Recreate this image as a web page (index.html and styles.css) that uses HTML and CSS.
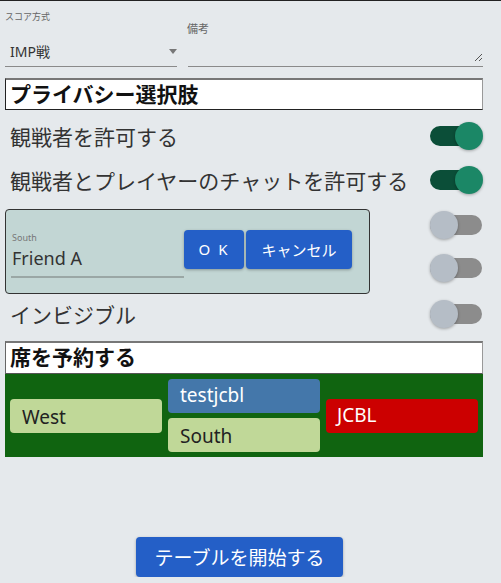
FILE: index.html
```html
<!DOCTYPE html>
<html lang="ja">
<head>
    <meta charset="UTF-8">
    <meta name="viewport" content="width=device-width, initial-scale=1.0">
    <title>テーブル設定</title>
    <link rel="stylesheet" href="styles.css">
</head>
<body>
    <div class="panel">
        <!-- scoring + notes -->
        <div class="field-row">
            <div class="field field-select">
                <span class="field-label label-score">スコア方式</span>
                <div class="field-input">
                    <span>IMP戦</span>
                    <svg class="arrow" width="8" height="5" viewBox="0 0 8 5"><path d="M0 0 H8 L4 5 Z" fill="#777"/></svg>
                </div>
            </div>
            <div class="field field-notes">
                <span class="field-label">備考</span>
                <div class="field-input notes-input">
                    <svg class="resize" width="9" height="9" viewBox="0 0 9 9"><path d="M1 8 L8 1 M5 8 L8 5" stroke="#555" stroke-width="1"/></svg>
                </div>
            </div>
        </div>

        <h2 class="section-title">プライバシー選択肢</h2>

        <div class="row">
            <span>観戦者を許可する</span>
            <span class="switch on"><span class="track"></span><span class="thumb"></span></span>
        </div>
        <div class="row">
            <span>観戦者とプレイヤーのチャットを許可する</span>
            <span class="switch on"><span class="track"></span><span class="thumb"></span></span>
        </div>

        <div class="friend-row">
            <div class="friend-box">
                <div class="friend-field">
                    <span class="friend-label">South</span>
                    <span class="friend-value">Friend A</span>
                </div>
                <button class="btn btn-ok">O K</button>
                <button class="btn btn-cancel">キャンセル</button>
            </div>
            <div class="switch-col">
                <span class="switch"><span class="track"></span><span class="thumb"></span></span>
                <span class="switch"><span class="track"></span><span class="thumb"></span></span>
            </div>
        </div>

        <div class="row row-short">
            <span>インビジブル</span>
            <span class="switch"><span class="track"></span><span class="thumb"></span></span>
        </div>

        <h2 class="section-title title-seats">席を予約する</h2>
        <div class="seats">
            <div class="seat-col">
                <div class="seat seat-free">West</div>
            </div>
            <div class="seat-col">
                <div class="seat seat-me">testjcbl</div>
                <div class="seat seat-free">South</div>
            </div>
            <div class="seat-col">
                <div class="seat seat-taken">JCBL</div>
            </div>
        </div>

        <button class="btn btn-start">テーブルを開始する</button>
    </div>
</body>
</html>
```

FILE: styles.css
```css
body {
    margin: 0;
    border-top: 1px solid #222;
    background-color: #e5e9ec;
    font-family: "Noto Sans", "Noto Sans CJK JP", sans-serif;
    color: #333;
}
.panel {
    width: 478px;
    margin-left: 5px;
    display: flex;
    flex-direction: column;
}

/* top fields */
.field-row {
    display: flex;
    gap: 10px;
    height: 66px;
}
.field {
    display: flex;
    flex-direction: column;
    justify-content: flex-end;
}
.field-select {
    width: 172px;
}
.field-notes {
    flex: 1;
}
.field-label {
    font-size: 11px;
    color: #666;
    line-height: 14px;
}
.label-score {
    font-size: 9px;
    margin-bottom: 12px;
}
.field-input {
    position: relative;
    height: 30px;
    border-bottom: 1px solid #8a8a8a;
    display: flex;
    align-items: center;
    padding-left: 5px;
    font-size: 14px;
    color: #333;
}
.notes-input {
    height: 29px;
    margin-top: 1px;
    margin-left: 1px;
}
.arrow {
    position: absolute;
    right: 0;
    top: 13px;
}
.resize {
    position: absolute;
    right: 0;
    bottom: 4px;
}

/* section titles */
.section-title {
    margin: 11px 0 0;
    height: 29px;
    background: #fff;
    border: 1px solid #222;
    border-top: 2px solid #777;
    border-right-color: #999;
    font-size: 21px;
    font-weight: bold;
    line-height: 29px;
    padding-left: 4px;
    color: #111;
}
.title-seats {
    margin-top: 7px;
    height: 30px;
    border-bottom: 1px solid #555;
    border-left-color: #666;
}

/* setting rows */
.row {
    display: flex;
    align-items: center;
    justify-content: space-between;
    height: 44px;
    padding-left: 5px;
    font-size: 21px;
    color: #333;
}
.section-title + .row {
    margin-top: 4px;
}
.row-short {
    height: 40px;
}

/* switches */
.switch {
    position: relative;
    width: 53px;
    height: 30px;
    flex: none;
}
.switch .track {
    position: absolute;
    left: 0;
    right: 1px;
    top: 5px;
    height: 20px;
    border-radius: 10px;
    background: #8c8c8c;
}
.switch .thumb {
    position: absolute;
    left: 0;
    top: 1px;
    width: 28px;
    height: 28px;
    border-radius: 50%;
    background: #b5bdc6;
    box-shadow: 0 1px 3px rgba(0, 0, 0, 0.3);
}
.switch.on .track {
    background: #0b4e38;
    right: 6px;
}
.switch.on .thumb {
    left: auto;
    right: 0;
    background: #1b8766;
}

/* friend picker */
.friend-row {
    display: flex;
    justify-content: space-between;
    margin-top: 7px;
}
.friend-box {
    width: 358px;
    height: 81px;
    background: #c2d6d4;
    border: 1px solid #333;
    border-radius: 4px;
    display: flex;
    align-items: center;
    padding-left: 5px;
    padding-top: 2px;
    box-sizing: content-box;
}
.friend-field {
    width: 173px;
    height: 46px;
    display: flex;
    flex-direction: column;
    border-bottom: 2px solid #9aa7a5;
    margin-top: 5px;
    padding-left: 1px;
    box-sizing: border-box;
}
.friend-label {
    font-size: 9px;
    color: #777;
    line-height: 12px;
}
.friend-value {
    font-size: 18px;
    color: #333;
    line-height: 28px;
}
.switch-col {
    display: flex;
    flex-direction: column;
    gap: 13px;
    padding-top: 1px;
}

/* buttons */
.btn {
    border: none;
    border-radius: 4px;
    background-color: #245fc7;
    color: #fff;
    font-family: "Noto Sans", "Noto Sans CJK JP", sans-serif;
    cursor: pointer;
    box-shadow: 0 1px 3px rgba(0, 0, 0, 0.3);
}
.btn:hover {
    background-color: #1d4fa8;
}
.btn-ok {
    width: 60px;
    height: 39px;
    font-size: 15px;
    letter-spacing: 2px;
    margin-top: -7px;
}
.btn-cancel {
    width: 106px;
    height: 39px;
    margin-left: 2px;
    font-size: 15px;
    margin-top: -7px;
}
.btn-start {
    align-self: flex-start;
    margin-left: 131px;
    margin-top: 80px;
    width: 207px;
    height: 40px;
    font-size: 19px;
}

/* seats */
.seats {
    height: 83px;
    background: #106410;
    display: flex;
    gap: 6px;
    padding: 0 5px;
}
.seat-col {
    flex: 1;
    display: flex;
    flex-direction: column;
    justify-content: center;
    gap: 5px;
}
.seat {
    height: 34px;
    border-radius: 4px;
    padding-left: 12px;
    font-size: 19px;
    line-height: 32px;
}
.seat-free {
    background: #c0d898;
    color: #222;
    line-height: 36px;
}
.seat-me {
    background: #4477aa;
    color: #fff;
}
.seat-taken {
    background: #cc0000;
    color: #fff;
    padding-left: 11px;
}
```
